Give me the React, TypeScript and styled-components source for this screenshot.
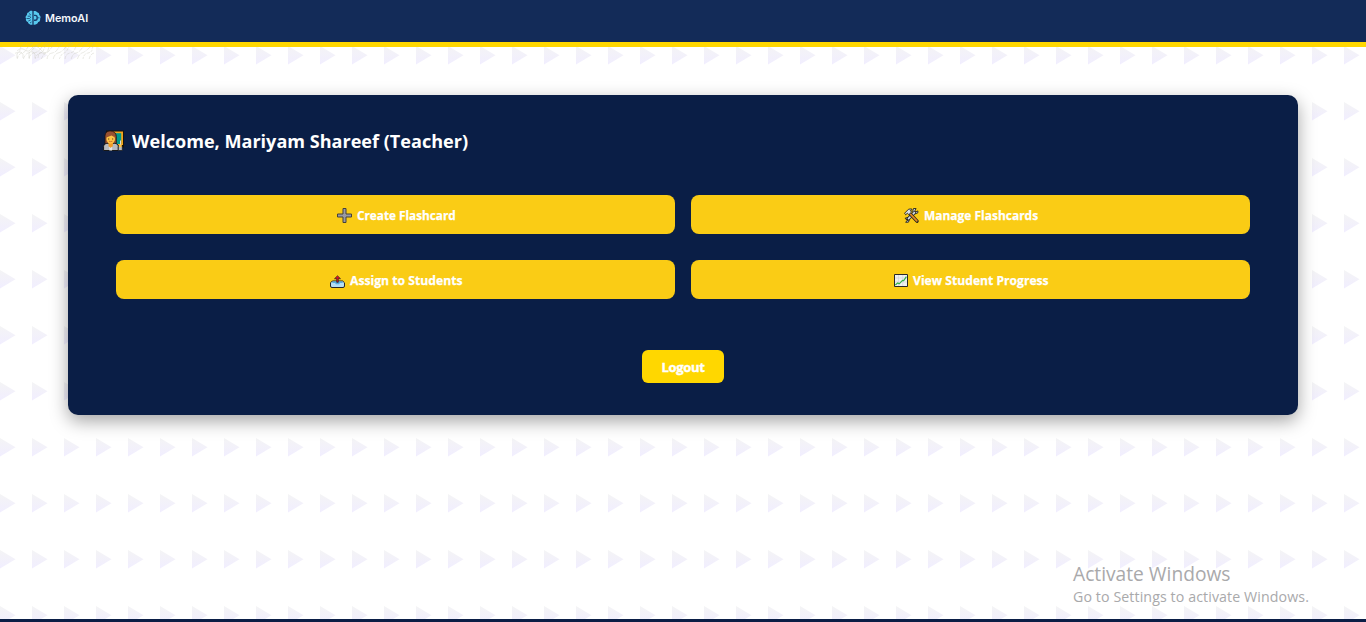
import React from 'react';
import styled, { createGlobalStyle } from 'styled-components';

const GlobalStyle = createGlobalStyle`
  * { box-sizing: border-box; }
  body { margin: 0; background: #fff; overflow: hidden; font-family: "Open Sans", "Noto Sans", sans-serif; }
`;
const Page = styled.div`
  position: relative; height: 622px; overflow: hidden;
  display: flex; flex-direction: column;
`;
const Backdrop = styled.svg`
  position: absolute; inset: 0; width: 100%; height: 100%;
`;
const Header = styled.header`
  position: relative; height: 47px; flex: none; background: #132b58;
  border-bottom: 5px solid #ffd700; padding: 10px 25px;
`;
const Brand = styled.div`
  display: flex; align-items: center; gap: 4px; height: 16px;
  color: #f4f7fb; font-family: "Inter", "Roboto", sans-serif; font-size: 10.8px; font-weight: 600; line-height: 16px;
  svg { width: 16px; height: 16px; flex: none; }
  span { padding-top: 2px; }
`;
const Grain = styled.svg`
  position: absolute; left: 15px; top: 29px; width: 82px; height: 31px;
`;
const Card = styled.main`
  position: relative; flex: none; width: 1230px; height: 320px; margin: 48px auto 0;
  background: #0a1e46; border-radius: 10px; padding: 31px 32px 32px;
  box-shadow: 0 6px 18px rgba(0,0,0,.36);
  display: flex; flex-direction: column; align-items: center;
`;
const Title = styled.h1`
  width: 100%; height: 30px; margin: 0; padding-left: 3px; color: #fff;
  display: flex; align-items: center; gap: 8px;
  font-size: 18.6px; font-weight: 700; line-height: 30px; white-space: nowrap;
  svg { width: 21px; height: 21px; flex: none; margin-top: -1px; }
`;
const Squeeze = styled.span<{ $x: number }>`
  display: inline-block; white-space: nowrap;
  transform: scaleX(${p => p.$x}); transform-origin: left center;
`;
const Actions = styled.div`
  width: 1134px; margin-top: 39px;
  display: grid; grid-template-columns: 1fr 1fr; gap: 26px 16px;
`;
const Action = styled.button`
  height: 39px; border: 0; border-radius: 8px; background: #facc15; color: #fff; padding: 0;
  display: flex; align-items: center; justify-content: center;
  font: 700 13px/20px "Open Sans", "Noto Sans", sans-serif;
  svg { width: 15px; height: 15px; flex: none; margin: 2px 5px 0 0; }
`;
const Label = styled.span<{ $width: number }>`
  width: ${p => p.$width}px; text-align: left; white-space: nowrap;
  -webkit-text-stroke: .25px #fff;
`;
const Logout = styled.button`
  width: 82px; height: 33px; margin-top: 51px; padding: 0; border: 0; border-radius: 6px;
  background: #ffd700; color: #fff; font: 700 13px/20px "Open Sans", "Noto Sans", sans-serif;
  letter-spacing: -.3px; -webkit-text-stroke: .4px #fff;
`;
const Notice = styled.aside`
  position: absolute; left: 1073px; top: 562px; color: #a9a9ab; white-space: nowrap;
`;
const NoticeTitle = styled.div`font-size: 19.2px; line-height: 24px;`;
const NoticeText = styled.div`font-size: 14.2px; line-height: 21px; letter-spacing: .1px;`;
const Footer = styled.footer`
  position: relative; height: 3px; flex: none; margin-top: auto; background: #0a1e46;
`;

const BrainLogo = () => (
  <svg viewBox="0 0 16 16" fill="none">
    <path d="M7.4 1C5.8.6 4.5 1.2 4 2.2 2.3 2.4 1.6 3.8 2 5 .5 5.9.2 7.5 1 8.6.5 10.5 1.4 11.8 2.8 12c.4 2 2.7 3.1 4.6 2.8zM8.6 1c1.6-.4 3 .2 3.6 1.3 1.6.3 2.2 1.5 2 2.7 1.5.9 1.7 2.7.9 3.8.4 1.6-.5 3-1.9 3.3-.5 1.9-2.6 3-4.6 2.7z" fill="#58c8ee" />
    <path d="M4 3.5l1.8 1.3M2.7 6.2h2.8M1.5 8.5h3L6 7M3.3 11l2.5-1.2M5 13l1.5-1" stroke="#174070" strokeWidth=".8" />
    <path d="M9 5.4h1.4c1.2 0 1.8 1 1.8 2.4s-.6 2.5-1.8 2.5H9" stroke="#174070" strokeWidth="1.4" />
    <path d="M12.4 7.8h2" stroke="#174070" strokeWidth=".8" />
  </svg>
);
const Teacher = () => (
  <svg viewBox="0 0 21 21">
    <path d="M3 .5h18v17H3z" fill="#15130f" />
    <path d="M7 1.5h13V15H7z" fill="#f4a51c" /><path d="M8 3.2h10.2V14H8z" fill="#009a8c" />
    <path d="M2 14V6.5C2 2.5 4.2 1 7.5 1s5.8 2 5.8 5.5V14z" fill="#985131" stroke="#20110c" strokeWidth=".8" />
    <path d="M.6 20.5v-4.2c0-2 2-3 4.3-3h6.4c2.3 0 4 1.2 4 3v4.2z" fill="#b9bbc0" stroke="#171717" />
    <path d="M5.3 12h4.8l-.4 4.5L7.7 18l-2.1-1.6z" fill="#f09a23" />
    <ellipse cx="7.7" cy="9" rx="4.3" ry="4.7" fill="#ffc344" />
    <path d="M3.3 7.6C4 5 5.7 3.5 7.7 3.5s3.7 1.5 4.3 4.1L8.5 5.6z" fill="#985131" />
    <path d="M5.2 9h1M9.2 9h1" stroke="#392414" />
    <path d="M5.9 11.2q1.8 1 3.6 0" stroke="#be5925" strokeWidth=".7" fill="none" />
    <path d="M6.3 16.5l1.4 1.5 1.4-1.5v4H6.3z" fill="#e5e5e5" />
    <path d="M17.5 10.5v5" stroke="#ddd" /><path d="M15.3 16.5h4v4h-4z" fill="#b9bbc0" stroke="#171717" strokeWidth=".7" />
    <path d="M15.8 14.5h3v2.6h-3z" fill="#ffc344" />
  </svg>
);
const Plus = () => (
  <svg viewBox="0 0 15 15"><path d="M6 .5h3V6h5.5v3H9v5.5H6V9H.5V6H6z" fill="#9a9ba3" stroke="#45413c" /></svg>
);
const Tools = () => (
  <svg viewBox="0 0 15 15" fill="none" strokeLinecap="round">
    <path d="M9.4.8L8.6 3.6 10.7 6l3.1-1.1.1-2-2 1-1-1 1-2z" fill="#c6ced1" stroke="#24231f" strokeWidth=".9" />
    <path d="M1.3 10.2l2.8-.8 1.5 2-1.2 2.8-2.7.1 1.4-1.8z" fill="#c6ced1" stroke="#24231f" strokeWidth=".9" />
    <path d="M4 11L10.4 4.6" stroke="#24231f" strokeWidth="3.2" />
    <path d="M4.5 10.6L10.4 4.6" stroke="#d9dfe2" strokeWidth="1.7" />
    <path d="M5.8 5.5l7.2 7.7" stroke="#24231f" strokeWidth="3.3" /><path d="M6.2 5.9l6.6 7" stroke="#e48b20" strokeWidth="1.7" />
    <path d="M.8 5L4.6 1.2l3-.3.3 1-1.5.6 1.1 1.6-2.7 2.6-1.4-1.5L2 6.5z" fill="#d9dfe2" stroke="#24231f" strokeWidth=".9" />
  </svg>
);
const Outbox = () => (
  <svg viewBox="0 0 15 15">
    <path d="M2.3 8h10.4l1.8 1.8V13q0 1.5-1.5 1.5H2Q.5 14.5.5 13V9.8z" fill="#b5def3" stroke="#24282b" />
    <path d="M3 8.6h9l1 1.4h-3l-1 1.2H6l-1-1.2H2z" fill="#58aee0" />
    <path d="M7.5 2.8l3 2.9H8.3v3.6H6.7V5.7H4.5z" fill="#df1126" stroke="#292325" strokeWidth=".7" />
  </svg>
);
const Chart = () => (
  <svg viewBox="0 0 15 15" fill="none">
    <path d="M1.5 1.5h13v12h-13z" fill="#eff1f1" stroke="#292929" />
    <path d="M5.5 2v11M9.7 2v11M2 5h12M2 9h12" stroke="#d0d4d5" strokeWidth=".6" />
    <path d="M2.3 12l2.4-2 1.5.8 3.3-3.4 1.2.2 2.7-4" stroke="#35b34a" strokeWidth="1.2" />
  </svg>
);

const actions = [
  { label: 'Create Flashcard', width: 98, squeeze: .905, icon: <Plus /> },
  { label: 'Manage Flashcards', width: 114, squeeze: .92, icon: <Tools /> },
  { label: 'Assign to Students', width: 112, squeeze: .937, icon: <Outbox /> },
  { label: 'View Student Progress', width: 135, squeeze: .933, icon: <Chart /> },
];

export default function App() {
  return (
    <Page>
      <GlobalStyle />
      <Backdrop aria-hidden="true">
        <defs>
          <linearGradient id="tint" x1="0" y1="0" x2="0" y2="1"><stop stopColor="#f4f4f5" /><stop offset="1" stopColor="#f1eeff" /></linearGradient>
          <pattern id="triangles" width="32" height="56" y="46" patternUnits="userSpaceOnUse"><path d="M0 0L15.5 9.2 0 18.5z" fill="url(#tint)" /></pattern>
        </defs>
        <rect width="100%" height="100%" fill="url(#triangles)" />
      </Backdrop>
      <Header>
        <Brand><BrainLogo /><span>MemoAI</span></Brand>
        <Grain viewBox="0 0 82 31" fill="none" aria-hidden="true">
          <clipPath id="grainClip"><path d="M0 13h80v17H0z" /></clipPath>
          <g clipPath="url(#grainClip)" strokeWidth=".6" stroke="#b8b8a8" strokeOpacity=".5">
            {Array.from({ length: 14 }, (_, i) => (
              <path key={i} d={`M${i * 6 - 4} 31q${i % 3} -6 5 -7t${4 + (i % 4)} -5l7 -6`} strokeDasharray={`${3 + (i % 4)} 1`} />
            ))}
            <path d="M2 22q4-4 8-1t7-2 9 2 8-3M2 29v-4q3-4 6 0v4M14 29v-5q3-3 6 1v4M23 29q0-8 7-4" />
          </g>
        </Grain>
      </Header>
      <Card>
        <Title><Teacher /><Squeeze $x={0.972}>Welcome, Mariyam Shareef (Teacher)</Squeeze></Title>
        <Actions>
          {actions.map(a => <Action key={a.label}>{a.icon}<Label $width={a.width}><Squeeze $x={a.squeeze}>{a.label}</Squeeze></Label></Action>)}
        </Actions>
        <Logout>Logout</Logout>
      </Card>
      <Footer />
      <Notice><NoticeTitle>Activate Windows</NoticeTitle><NoticeText>Go to Settings to activate Windows.</NoticeText></Notice>
    </Page>
  );
}
